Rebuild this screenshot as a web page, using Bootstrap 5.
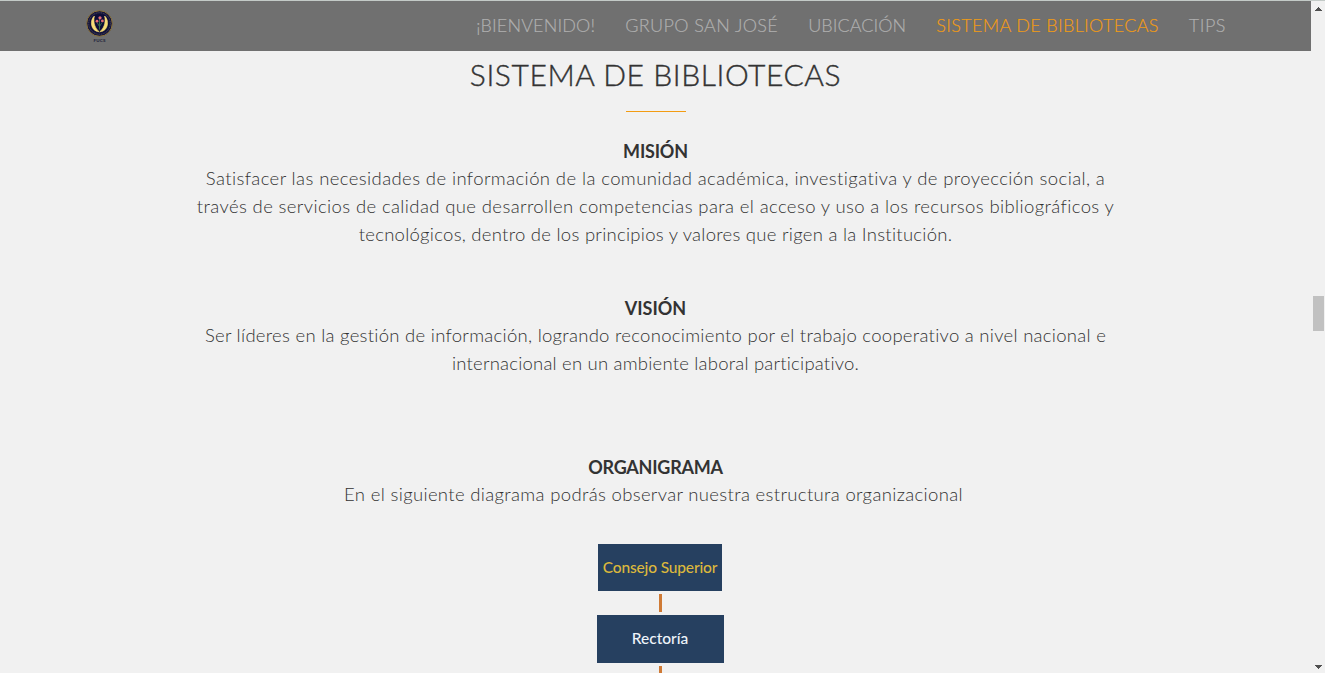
<!DOCTYPE html>
<html lang="es">
<head>
<meta charset="utf-8">
<meta name="viewport" content="width=device-width, initial-scale=1">
<title>Sistema de Bibliotecas</title>
<link href="https://cdn.jsdelivr.net/npm/bootstrap@5.3.0/dist/css/bootstrap.min.css" rel="stylesheet">
<style>
body{height:673px;background:#f1f1f1;color:#333;font-family:Lato,sans-serif;font-weight:300;font-size:18.5px;line-height:28px;border-top:1px solid #c3cac7}
.page{height:672px;min-width:0}
.site-nav{height:50px;padding:0 85px 0 86px;background:#707070;font-size:18px}
.site-nav .nav-link{color:#b0b0b0;padding:0;white-space:nowrap;-webkit-text-stroke:.15px currentColor}
.site-nav .nav-link.active{color:#f39c12}
.menu{gap:30px;padding-bottom:2px}
.logo{width:28px;height:36px}
.heading{font-size:30px;line-height:34px;font-weight:300;margin-top:6px;letter-spacing:.58px;-webkit-text-stroke:.4px #333}
.rule{width:60px;height:1px;background:#f39c12;margin:20px auto 24px}
.topic{white-space:nowrap}
.topic h2{font-size:18px;line-height:28px;font-weight:700;margin:0;padding-top:1px;margin-bottom:-1px}
.topic span{display:block}
.vision{margin-top:45px}
.org{margin-top:75px}
.chart{margin:36px 0 0 9px;font-weight:500;font-size:15.5px}
.unit{background:#264060;color:#eef4fa;white-space:nowrap;padding-bottom:2px}
.unit-top{width:124px;height:47px;color:#dcb83c;letter-spacing:-.15px}
.unit-next{width:127px;height:48px}
.link-line{width:3px;height:18px;background:#cf7a35;margin:3px 0}
.scroller{width:14px;padding:6px 1px 4px 2px}
.thumb{width:11px;height:35px;background:#c1c1c1;margin:285px 0 auto}
</style>
</head>
<body class="d-flex overflow-hidden">
<main class="page flex-grow-1 text-center overflow-hidden">
<nav class="site-nav d-flex justify-content-between align-items-center">
<svg class="logo" viewBox="0 0 28 36">
<circle cx="13.5" cy="15.5" r="12.8" fill="#15143c" stroke="#8d7437" stroke-width="1"/>
<circle cx="13.5" cy="15.5" r="10.8" fill="none" stroke="#4d4b58" stroke-width="1" stroke-dasharray="1 .8"/>
<circle cx="13.5" cy="15.5" r="9.6" fill="#0d0d38"/>
<path d="M8.4 8C3.4 12 4.4 23.4 13.2 23.8C9.4 20.5 6.8 15 8.4 8ZM18.6 8C23.6 12 22.6 23.4 13.8 23.8C17.6 20.5 20.2 15 18.6 8Z" fill="#f7dc77" stroke="#f7dc77" stroke-width=".6"/>
<path d="M13.5 11V21.5M13.5 18.5L11 14.5M13.5 18.5L16 14.5" fill="none" stroke="#376a48" stroke-width="1"/>
<g fill="#e46a74"><circle cx="14" cy="9.8" r="1.6"/><circle cx="11" cy="13.2" r="1.4"/><circle cx="16.4" cy="12.9" r="1.4"/></g>
<text x="13.5" y="33.6" text-anchor="middle" font-family="Lato,sans-serif" font-size="4.5" font-weight="900" letter-spacing=".2" fill="#26273f">FUCS</text>
</svg>
<div class="menu d-flex">
<a class="nav-link" style="letter-spacing:.14px">¡BIENVENIDO!</a>
<a class="nav-link" style="letter-spacing:.38px">GRUPO SAN JOSÉ</a>
<a class="nav-link" style="letter-spacing:.05px">UBICACIÓN</a>
<a class="nav-link active" style="letter-spacing:.34px">SISTEMA DE BIBLIOTECAS</a>
<a class="nav-link" style="letter-spacing:.5px">TIPS</a>
</div>
</nav>
<h1 class="heading mb-0">SISTEMA DE BIBLIOTECAS</h1>
<div class="rule"></div>
<section class="topic">
<h2 style="letter-spacing:-.2px">MISIÓN</h2>
<span style="letter-spacing:.4px">Satisfacer las necesidades de información de la comunidad académica, investigativa y de proyección social, a</span>
<span style="letter-spacing:.384px">través de servicios de calidad que desarrollen competencias para el acceso y uso a los recursos bibliográficos y</span>
<span style="letter-spacing:.268px">tecnológicos, dentro de los principios y valores que rigen a la Institución.</span>
</section>
<section class="topic vision">
<h2>VISIÓN</h2>
<span style="letter-spacing:.28px">Ser líderes en la gestión de información, logrando reconocimiento por el trabajo cooperativo a nivel nacional e</span>
<span style="letter-spacing:.21px">internacional en un ambiente laboral participativo.</span>
</section>
<section class="topic org">
<h2 style="letter-spacing:-.25px">ORGANIGRAMA</h2>
<span class="pe-1" style="letter-spacing:.34px">En el siguiente diagrama podrás observar nuestra estructura organizacional</span>
</section>
<div class="chart d-flex flex-column align-items-center">
<div class="unit unit-top d-flex align-items-center justify-content-center">Consejo Superior</div>
<div class="link-line"></div>
<div class="unit unit-next d-flex align-items-center justify-content-center">Rectoría</div>
<div class="link-line"></div>
</div>
</main>
<aside class="scroller d-flex flex-column align-items-center">
<svg class="flex-shrink-0" width="7" height="4" viewBox="0 0 7 4"><path d="M3 0h1v1h1v1h1v1h1v1H0V3h1V2h1V1h1z" fill="#505050"/></svg>
<div class="thumb"></div>
<svg class="flex-shrink-0" width="7" height="4" viewBox="0 0 7 4"><path d="M0 0h7v1H6v1H5v1H4v1H3V3H2V2H1V1H0z" fill="#505050"/></svg>
</aside>
<script src="https://cdn.jsdelivr.net/npm/bootstrap@5.3.0/dist/js/bootstrap.bundle.min.js"></script>
</body>
</html>
